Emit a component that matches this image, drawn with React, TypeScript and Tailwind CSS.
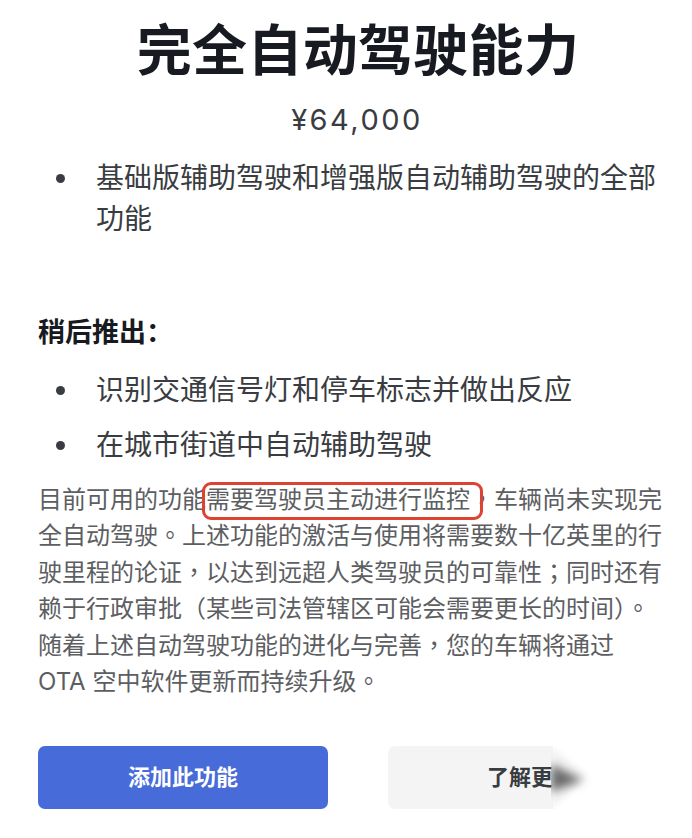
import React from "react"

const cjk = { fontFamily: 'Inter, "Noto Sans CJK SC", sans-serif' }
const tc = { fontFamily: '"Noto Sans CJK TC", sans-serif' }

// centred punctuation, as the reference shows it
const P = ({ children }: { children: string }) => <span className="leading-none" style={tc}>{children}</span>

const Bullet = ({ children }: { children: React.ReactNode }) => (
    <li className="flex">
        <span className="w-[58px] shrink-0 flex justify-start pl-[18px] pt-[16px]">
            <span className="block w-[9px] h-[9px] rounded-full bg-[#393c41]" />
        </span>
        <span className="flex-1">{children}</span>
    </li>
)

export default function App() {
    return (
        <div className="w-[692px] h-[838px] bg-white overflow-hidden" style={cjk}>
            <div className="pl-[38px] pr-[30px]">
                <h1 className="pt-[16px] pl-[16px] text-center text-[55px] leading-[68px] font-bold text-[#171a20] tracking-[0.3px]">
                    完全自动驾驶能力
                </h1>
                <p className="mt-[18px] pl-[14px] text-center text-[29px] leading-[36px] text-[#393c41] tracking-[2.5px]">
                    ¥64,000
                </p>

                <ul className="mt-[20px] text-[28px] leading-[41px] text-[#393c41]">
                    <Bullet>基础版辅助驾驶和增强版自动辅助驾驶的全部功能</Bullet>
                </ul>

                <h2 className="mt-[73px] text-[27px] leading-[40px] font-bold text-[#171a20]">稍后推出：</h2>

                <ul className="mt-[17px] flex flex-col gap-[14px] text-[28px] leading-[41px] text-[#393c41]">
                    <Bullet>识别交通信号灯和停车标志并做出反应</Bullet>
                    <Bullet>在城市街道中自动辅助驾驶</Bullet>
                </ul>

                <p className="mt-[16px] text-[24px] leading-[36.4px] text-[#5c5e62]">
                    目前可用的功能
                    <span className="relative">
                        需要驾驶员主动进行监控
                        <span className="absolute -left-[4px] -right-[13px] -top-[3px] -bottom-[6px] border-[3px] border-[#dc4330] rounded-[9px]" />
                    </span>
                    <P>，</P>车辆尚未实现完全自动驾驶<P>。</P>上述功能的激活与使用将需要数十亿英里的行驶里程的论证<P>，</P>以达到远超人类驾驶员的可靠性<P>；</P>同时还有赖于行政审批<P>（</P>某些司法管辖区可能会需要更长的时间<P>）。</P>随着上述自动驾驶功能的进化与完善<P>，</P>您的车辆将通过
                    <br />
                    OTA 空中软件更新而持续升级<P>。</P>
                </p>

                <div className="mt-[46px] flex items-center gap-[60px]">
                    <button className="w-[290px] h-[63px] rounded-[7px] bg-[#476bd8] text-white text-[22px] font-semibold">
                        添加此功能
                    </button>
                    <div className="flex items-center">
                        <div className="w-[165px] h-[63px] rounded-l-[7px] bg-[#f4f4f4] flex items-center justify-end text-[22px] font-semibold text-[#393c41]">
                            了解更
                        </div>
                        <svg width="60" height="63" viewBox="0 0 60 63" className="-ml-[2px]">
                            <defs>
                                <filter id="blur1" x="-50%" y="-50%" width="200%" height="200%">
                                    <feGaussianBlur stdDeviation="3" />
                                </filter>
                                <filter id="blur2" x="-50%" y="-50%" width="200%" height="200%">
                                    <feGaussianBlur stdDeviation="5" />
                                </filter>
                            </defs>
                            <polygon points="0,0 36,31 0,63" fill="#f2f2f2" filter="url(#blur1)" />
                            <polygon points="0,18 32,34 0,46" fill="#6a6a6a" filter="url(#blur2)" />
                        </svg>
                    </div>
                </div>
            </div>
        </div>
    )
}
